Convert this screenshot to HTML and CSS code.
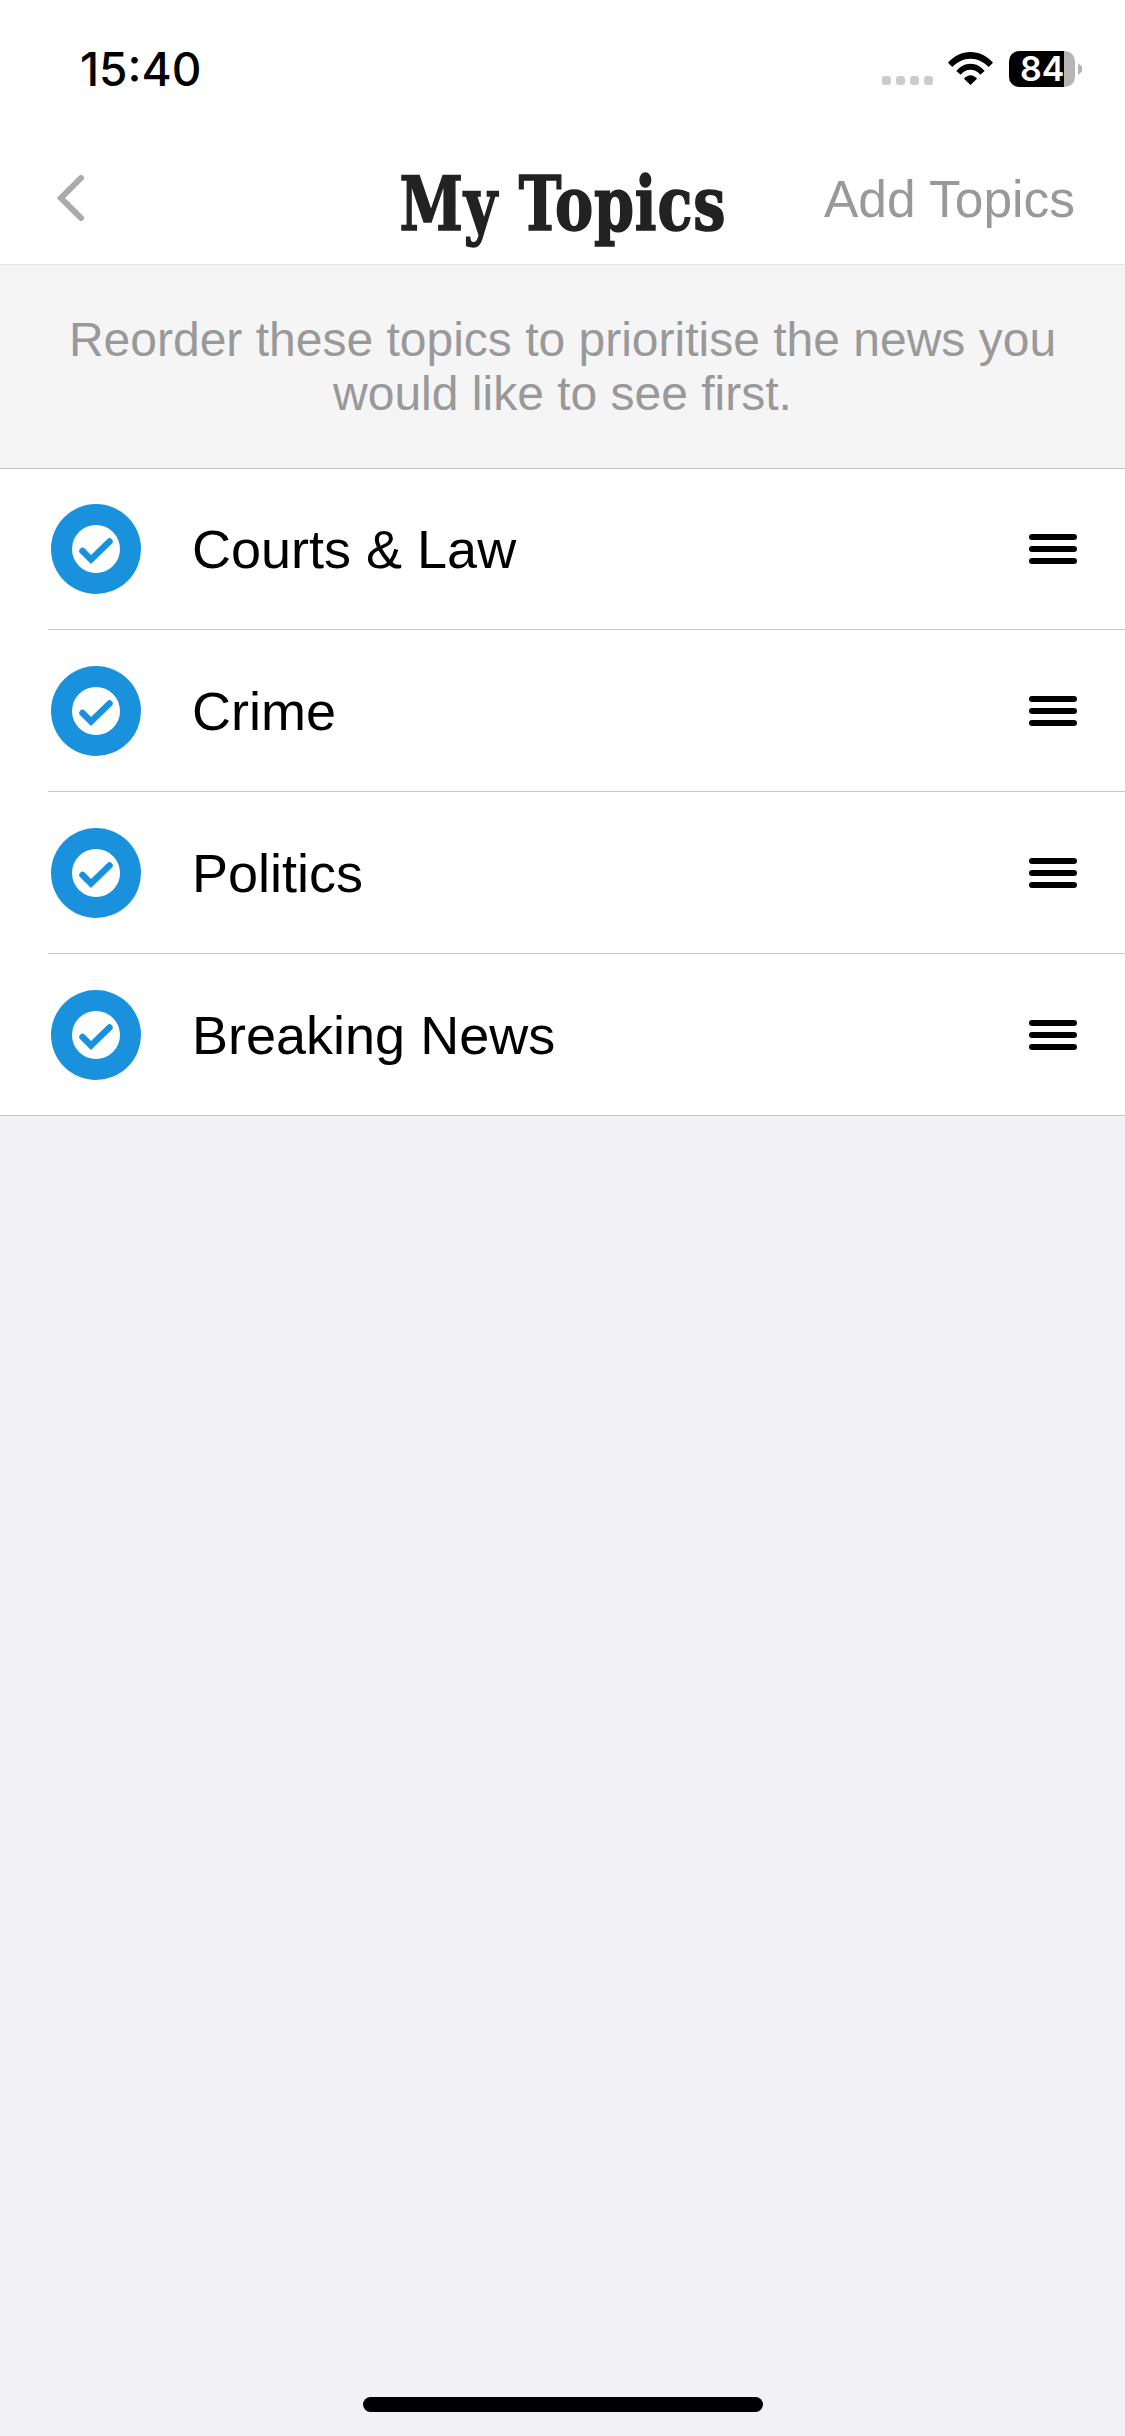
FILE: index.html
```html
<!DOCTYPE html>
<html lang="en">
<head>
  <meta charset="UTF-8">
  <meta name="viewport" content="width=device-width, initial-scale=1.0">
  <title>My Topics</title>
  <link rel="stylesheet" href="styles.css">
</head>
<body>
  <div class="status-bar">
    <span class="time">15:40</span>
    <div class="status-icons">
      <div class="signal">
        <span></span><span></span><span></span><span></span>
      </div>
      <svg class="wifi" width="45" height="33" viewBox="0 0 45 33">
        <path d="M0 10.700C6 4 14 0 22.500 0S39 4 45 10.700L40.700 15C35.500 9.800 29.500 6.700 22.500 6.700S9.500 9.800 4.300 15Z"/>
        <path d="M8.300 19C12 14.500 17 11.700 22.500 11.700S33 14.500 36.700 19L32.300 22.700C29.500 19.500 26.500 17.700 22.500 17.700S15.500 19.500 12.700 22.700Z"/>
        <path d="M16 26.700C18 24.500 20 23.300 22.500 23.300S27 24.500 29 26.700L22.500 33Z"/>
      </svg>
      <div class="battery">
        <div class="battery-body"><span class="battery-level">84</span></div>
        <div class="battery-cap"></div>
      </div>
    </div>
  </div>

  <header class="topbar">
    <div class="back">
      <svg width="36" height="50" viewBox="0 0 36 50">
        <path d="M31 5 L11 25 L31 45" fill="none" stroke="#aaa" stroke-width="6" stroke-linecap="round" stroke-linejoin="miter"/>
      </svg>
    </div>
    <h1>My Topics</h1>
    <a class="add-link" href="javascript:void(0);">Add Topics</a>
  </header>

  <p class="hint">Reorder these topics to prioritise the news you would like to see first.</p>

  <ul class="topics">
    <li class="topic">
      <svg class="tick" width="90" height="90" viewBox="0 0 90 90">
        <circle cx="45" cy="45" r="45" fill="#1a91dc"/>
        <circle cx="45" cy="45" r="24" fill="#fff"/>
        <path d="M31.500 47 L40 55.500 L58.500 37.500" fill="none" stroke="#1a91dc" stroke-width="6.500" stroke-linecap="round"/>
      </svg>
      <span class="topic-name">Courts &amp; Law</span>
      <div class="handle"><span></span><span></span><span></span></div>
    </li>
    <li class="topic">
      <svg class="tick" width="90" height="90" viewBox="0 0 90 90">
        <circle cx="45" cy="45" r="45" fill="#1a91dc"/>
        <circle cx="45" cy="45" r="24" fill="#fff"/>
        <path d="M31.500 47 L40 55.500 L58.500 37.500" fill="none" stroke="#1a91dc" stroke-width="6.500" stroke-linecap="round"/>
      </svg>
      <span class="topic-name">Crime</span>
      <div class="handle"><span></span><span></span><span></span></div>
    </li>
    <li class="topic">
      <svg class="tick" width="90" height="90" viewBox="0 0 90 90">
        <circle cx="45" cy="45" r="45" fill="#1a91dc"/>
        <circle cx="45" cy="45" r="24" fill="#fff"/>
        <path d="M31.500 47 L40 55.500 L58.500 37.500" fill="none" stroke="#1a91dc" stroke-width="6.500" stroke-linecap="round"/>
      </svg>
      <span class="topic-name">Politics</span>
      <div class="handle"><span></span><span></span><span></span></div>
    </li>
    <li class="topic">
      <svg class="tick" width="90" height="90" viewBox="0 0 90 90">
        <circle cx="45" cy="45" r="45" fill="#1a91dc"/>
        <circle cx="45" cy="45" r="24" fill="#fff"/>
        <path d="M31.500 47 L40 55.500 L58.500 37.500" fill="none" stroke="#1a91dc" stroke-width="6.500" stroke-linecap="round"/>
      </svg>
      <span class="topic-name">Breaking News</span>
      <div class="handle"><span></span><span></span><span></span></div>
    </li>
  </ul>

  <div class="home-indicator"></div>
</body>
</html>
```

FILE: styles.css
```css
html, body {
  height: 100%;
}

body {
  font-family: "Liberation Sans", Arial, sans-serif;
  margin: 0;
  padding: 0;
  background-color: #f1f1f6;
  display: flex;
  flex-direction: column;
}

.status-bar {
  background-color: #fff;
  height: 136px;
  box-sizing: border-box;
  padding: 46px 43px 0 80px;
  display: flex;
  justify-content: space-between;
  align-items: flex-start;
}

.time {
  font-family: Inter, sans-serif;
  font-weight: 500;
  font-size: 46px;
  line-height: 46px;
  color: #000;
}

.status-icons {
  display: flex;
  align-items: flex-start;
  padding-top: 5px;
}

.signal {
  display: flex;
  gap: 5px;
  margin-top: 25px;
  margin-right: 15px;
}

.signal span {
  width: 9px;
  height: 9px;
  border-radius: 3px;
  background-color: #ccc;
}

.wifi {
  margin-top: 1px;
  margin-right: 16px;
}

.battery {
  display: flex;
  align-items: center;
}

.battery-body {
  width: 66px;
  height: 36px;
  border-radius: 10px;
  background: linear-gradient(to right, #000 55px, #b5b5b5 55px);
  box-sizing: border-box;
  padding-left: 11px;
}

.battery-level {
  font-family: Inter, sans-serif;
  font-weight: 600;
  font-size: 34px;
  line-height: 36px;
  color: #fff;
  display: block;
}

.battery-cap {
  width: 4px;
  height: 12px;
  margin-left: 3px;
  background-color: #b5b5b5;
  clip-path: polygon(0 0, 100% 30%, 100% 70%, 0 100%);
}

.topbar {
  background-color: #fff;
  height: 129px;
  box-sizing: border-box;
  border-bottom: 1px solid #e2e2e2;
  padding: 0 50px;
  display: grid;
  grid-template-columns: 1fr auto 1fr;
  align-items: start;
}

.back {
  height: 50px;
  margin-top: 37px;
}

.back svg {
  display: block;
}

.topbar h1 {
  margin: 30px 0 0;
  font-family: "DejaVu Serif Condensed", "DejaVu Serif", serif;
  font-weight: bold;
  font-size: 74px;
  line-height: 76px;
  letter-spacing: 1px;
  color: #222;
  -webkit-text-stroke: 1.5px #222;
  transform: scaleX(0.86);
}

.add-link {
  justify-self: end;
  margin-top: 34px;
  font-size: 51.500px;
  line-height: 58px;
  color: #999;
  text-decoration: none;
}

.hint {
  margin: 0;
  height: 204px;
  box-sizing: border-box;
  padding: 48px 40px 0;
  background-color: #f5f5f5;
  border-bottom: 1px solid #c6c6c6;
  text-align: center;
  font-size: 48px;
  line-height: 54px;
  color: #999;
}

.topics {
  list-style: none;
  margin: 0;
  padding: 0;
  background-color: #fff;
  border-bottom: 1px solid #c6c6c6;
}

.topic {
  height: 162px;
  box-sizing: border-box;
  margin-left: 48px;
  padding: 0 48px 0 3px;
  border-bottom: 1px solid #c6c6c6;
  display: flex;
  align-items: center;
}

.topic:first-child {
  height: 161px;
}

.topic:last-child {
  height: 161px;
  border-bottom: none;
}

.tick {
  flex-shrink: 0;
}

.topic-name {
  margin-left: 51px;
  flex: 1;
  font-size: 54px;
  color: #000;
}

.handle {
  display: flex;
  flex-direction: column;
  gap: 6px;
}

.handle span {
  display: block;
  width: 48px;
  height: 6px;
  border-radius: 3px;
  background-color: #000;
}

.home-indicator {
  width: 400px;
  height: 15px;
  border-radius: 8px;
  background-color: #000;
  margin: auto auto 24px;
}
```
